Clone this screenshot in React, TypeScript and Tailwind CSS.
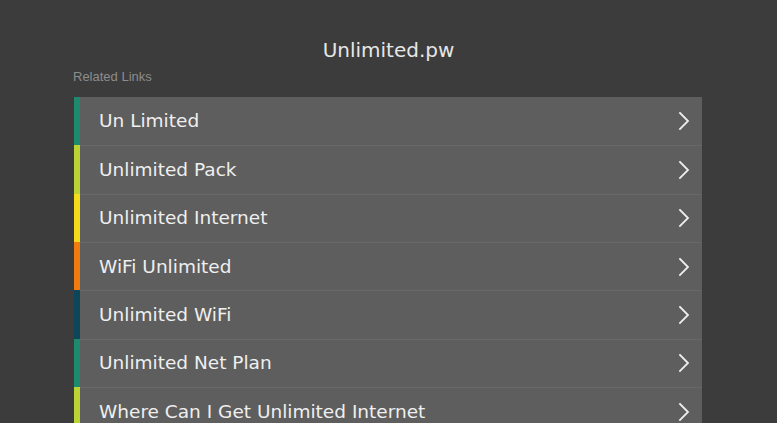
import React from "react";

const links = [
  { label: "Un Limited", color: "bg-[#1e8a6d]" },
  { label: "Unlimited Pack", color: "bg-[#bcd433]" },
  { label: "Unlimited Internet", color: "bg-[#f4dc1a]" },
  { label: "WiFi Unlimited", color: "bg-[#f07b0e]" },
  { label: "Unlimited WiFi", color: "bg-[#0d4658]" },
  { label: "Unlimited Net Plan", color: "bg-[#1e8a6d]" },
  { label: "Where Can I Get Unlimited Internet", color: "bg-[#bcd433]" },
];

function Chevron() {
  return (
    <svg width="12" height="20" viewBox="0 0 12 20" fill="none" className="shrink-0">
      <path d="M2 2 L10 10 L2 18" stroke="#eeeeee" strokeWidth="1.8" strokeLinecap="square" />
    </svg>
  );
}

export default function App() {
  return (
    <div className="w-[777px] h-[423px] overflow-hidden bg-[#3c3c3c] font-['DejaVu_Sans',sans-serif]">
      <div className="pt-[37px] flex justify-center">
        <h1 className="text-[20px] leading-[26px] text-[#e6e6e6]">Unlimited.pw</h1>
      </div>
      <div className="pl-[73px] mt-[6px] text-[13px] leading-[16px] text-[#8c8c8c] font-['Liberation_Sans',sans-serif]">
        Related Links
      </div>
      <div className="ml-[74px] mt-[12px] w-[628px] flex flex-col">
        {links.map((l, i) => (
          <div key={i} className="flex h-[48.33px] bg-[#5e5e5e]">
            <div className={`w-[6px] shrink-0 ${l.color}`} />
            <div
              className={`flex flex-1 items-center justify-between pl-[19px] pr-[12px] ${
                i > 0 ? "border-t border-[#686868]" : ""
              }`}
            >
              <span className="text-[18.5px] text-[#efefef]">{l.label}</span>
              <Chevron />
            </div>
          </div>
        ))}
      </div>
    </div>
  );
}
